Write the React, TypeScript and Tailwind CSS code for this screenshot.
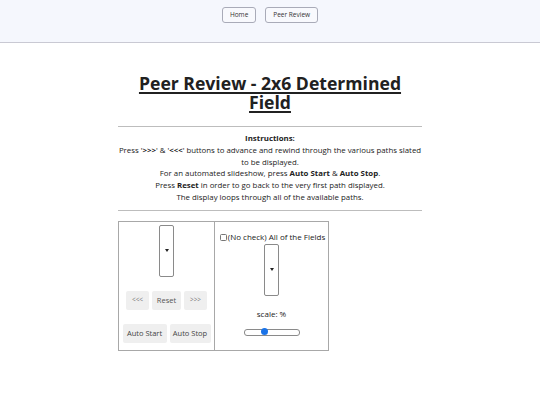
import React from "react";

export default function App() {
  const font = { fontFamily: '"Open Sans", "Noto Sans", sans-serif' };
  return (
    <div className="w-[540px] h-[405px] bg-white text-[#212121]" style={font}>
      <div className="h-[43px] bg-[#f5f7fd] border-b border-[#c9c9d3] flex justify-center gap-[9px] pt-[7px]">
        <button className="h-[16px] px-[7px] text-[6.5px] leading-none border border-[#a9abb8] rounded-[3px] bg-[#f8f9fd] text-[#333]">Home</button>
        <button className="h-[16px] px-[7px] text-[6.5px] leading-none border border-[#a9abb8] rounded-[3px] bg-[#f8f9fd] text-[#333]">Peer Review</button>
      </div>
      <div className="w-[304px] mx-auto">
        <h1 className="mt-[31px] text-center text-[17.6px] leading-[19px] font-bold underline underline-offset-[2px] decoration-[1.5px]">
          Peer Review - 2x6 Determined Field
        </h1>
        <div className="mt-[14px] border-t border-[#bdbdbd]" />
        <div className="pt-[6px] pb-[6px] mx-[-1px] text-center text-[7.85px] leading-[11.8px] text-[#222]">
          <div className="font-bold">Instructions:</div>
          <div>Press '<b>&gt;&gt;&gt;</b>' &amp; '<b>&lt;&lt;&lt;</b>' buttons to advance and rewind through the various paths slated to be displayed.</div>
          <div>For an automated slideshow, press <b>Auto Start</b> &amp; <b>Auto Stop</b>.</div>
          <div>Press <b>Reset</b> in order to go back to the very first path displayed.</div>
          <div>The display loops through all of the available paths.</div>
        </div>
        <div className="border-t border-[#bdbdbd]" />
      </div>
      <div className="ml-[118px] mt-[10px] w-[211px] h-[130px] border border-[#a8a8a8] flex">
        <div className="w-[96px] border-r border-[#a8a8a8] flex flex-col items-center">
          <div className="mt-[3px] w-[15px] h-[52px] border border-[#8a8a8a] rounded-[2px] flex items-center justify-center bg-white">
            <div className="w-0 h-0 border-l-[2.5px] border-r-[2.5px] border-t-[3px] border-l-transparent border-r-transparent border-t-[#222]" />
          </div>
          <div className="mt-[14px] flex gap-[3px]">
            <button className="w-[23px] h-[19px] bg-[#efefef] text-[6.5px] text-[#777] rounded-[2px]">&lt;&lt;&lt;</button>
            <button className="w-[29px] h-[19px] bg-[#efefef] text-[7.5px] text-[#555] rounded-[2px]">Reset</button>
            <button className="w-[23px] h-[19px] bg-[#efefef] text-[6.5px] text-[#777] rounded-[2px]">&gt;&gt;&gt;</button>
          </div>
          <div className="mt-[14px] flex gap-[3px]">
            <button className="w-[44px] h-[19px] bg-[#efefef] text-[7.5px] text-[#444] rounded-[2px]">Auto Start</button>
            <button className="w-[41px] h-[19px] bg-[#efefef] text-[7.5px] text-[#444] rounded-[2px]">Auto Stop</button>
          </div>
        </div>
        <div className="flex-1 flex flex-col items-center">
          <div className="mt-[10px] h-[11px] flex items-center text-[8px] text-[#222] pl-[2px]">
            <span className="inline-block w-[7px] h-[7px] border border-[#767676] rounded-[1.5px] mr-[1px]" />
            (No check) All of the Fields
          </div>
          <div className="mt-[1px] w-[15px] h-[52px] border border-[#8a8a8a] rounded-[2px] flex items-center justify-center bg-white">
            <div className="w-0 h-0 border-l-[2.5px] border-r-[2.5px] border-t-[3px] border-l-transparent border-r-transparent border-t-[#222]" />
          </div>
          <div className="mt-[12px] text-[8px] text-[#222]">scale: %</div>
          <div className="mt-[9px] relative w-[56px] h-[7px] border border-[#8a8a8a] rounded-[3px] bg-white">
            <div className="absolute left-[16px] top-[-1.5px] w-[7px] h-[7px] rounded-full bg-[#1a73e8]" />
          </div>
        </div>
      </div>
    </div>
  );
}
